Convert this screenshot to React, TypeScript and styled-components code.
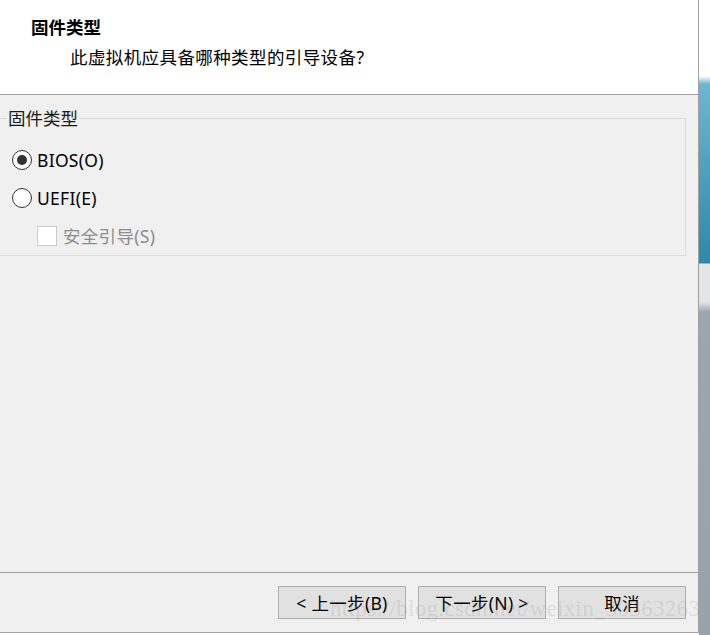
import React from "react";
import styled, { createGlobalStyle } from "styled-components";

const Global = createGlobalStyle`
  html, body {
    margin: 0;
    padding: 0;
    background: #ffffff;
  }
  body {
    font-family: "Noto Sans", "Noto Sans CJK SC", sans-serif;
    font-size: 17.5px;
    color: #000;
  }
`;

const Screen = styled.div`
  position: relative;
  display: flex;
  width: 710px;
  height: 635px;
  overflow: hidden;
  background: #ffffff;
`;

const Dialog = styled.div`
  display: flex;
  flex-direction: column;
  width: 699px;
  height: 633px;
  border-right: 1px solid #a0a0a0;
  border-bottom: 1px solid #a0a0a0;
  box-sizing: border-box;
  background: #f0f0f0;
  flex-shrink: 0;
`;

const Header = styled.div`
  height: 95px;
  box-sizing: border-box;
  background: #ffffff;
  border-bottom: 1px solid #a0a0a0;
  padding: 15px 0 0 31px;
  display: flex;
  flex-direction: column;
`;

const Title = styled.div`
  font-weight: bold;
  line-height: 24px;
  color: #000;
`;

const Subtitle = styled.div`
  margin: 6px 0 0 39px;
  line-height: 24px;
  letter-spacing: 0.4px;
  color: #000;
`;

const Body = styled.div`
  flex: 1;
  padding-top: 11px;
  box-sizing: border-box;
`;

const Group = styled.fieldset`
  margin: 0 12px 0 -4px;
  padding: 11px 0 0 15px;
  border: 1px solid #dcdcdc;
  min-width: 0;
`;

const Legend = styled.legend`
  margin-left: -5px;
  padding: 0 2px 0 1px;
  line-height: 24px;
  color: #1a1a1a;
`;

const Row = styled.label<{ $indent?: number }>`
  display: flex;
  align-items: center;
  height: 38px;
  padding-left: ${(p) => p.$indent ?? 0}px;
  gap: 5px;
`;

const RadioCircle = styled.span<{ $checked?: boolean }>`
  width: 20px;
  height: 20px;
  box-sizing: border-box;
  border-radius: 50%;
  border: 1px solid #333;
  background: #fff;
  display: flex;
  align-items: center;
  justify-content: center;
  &::after {
    content: "";
    width: 10px;
    height: 10px;
    border-radius: 50%;
    background: ${(p) => (p.$checked ? "#333" : "transparent")};
  }
`;

const CheckBox = styled.span`
  width: 20px;
  height: 20px;
  box-sizing: border-box;
  border: 1px solid #cccccc;
  background: #fff;
  margin-right: 1px;
`;

const OptionText = styled.span<{ $disabled?: boolean }>`
  color: ${(p) => (p.$disabled ? "#8d8d8d" : "#000")};
  line-height: 24px;
  letter-spacing: 0.3px;
`;

const Footer = styled.div`
  height: 60px;
  box-sizing: border-box;
  border-top: 1px solid #a0a0a0;
  display: flex;
  justify-content: flex-end;
  align-items: flex-start;
  gap: 12px;
  padding: 13px 12px 0 0;
`;

const Button = styled.button`
  width: 128px;
  height: 33px;
  box-sizing: border-box;
  background: #e1e1e1;
  border: 1px solid #adadad;
  font-family: "Noto Sans", "Noto Sans CJK SC", sans-serif;
  font-size: 17.5px;
  letter-spacing: 0.3px;
  color: #000;
  padding: 0;
  line-height: 24px;
`;

const Desktop = styled.div`
  flex: 1;
  height: 635px;
  background: linear-gradient(
    to bottom,
    #ffffff 0px,
    #ffffff 76px,
    #6db7d0 84px,
    #2f88aa 263px,
    #e3e5e7 264px,
    #e3e5e7 302px,
    #9ba6ae 312px,
    #97a2aa 635px
  );
`;

const Watermark = styled.div`
  position: absolute;
  left: 330px;
  top: 596px;
  font-family: "Liberation Serif", serif;
  font-size: 23px;
  letter-spacing: 0.3px;
  color: rgba(150, 150, 150, 0.22);
  pointer-events: none;
  white-space: nowrap;
`;

export default function App() {
  return (
    <>
      <Global />
      <Screen>
        <Dialog>
          <Header>
            <Title>固件类型</Title>
            <Subtitle>此虚拟机应具备哪种类型的引导设备?</Subtitle>
          </Header>
          <Body>
            <Group>
              <Legend>固件类型</Legend>
              <Row>
                <RadioCircle $checked />
                <OptionText>BIOS(O)</OptionText>
              </Row>
              <Row>
                <RadioCircle />
                <OptionText>UEFI(E)</OptionText>
              </Row>
              <Row $indent={25}>
                <CheckBox />
                <OptionText $disabled>安全引导(S)</OptionText>
              </Row>
            </Group>
          </Body>
          <Footer>
            <Button>&lt; 上一步(B)</Button>
            <Button>下一步(N) &gt;</Button>
            <Button>取消</Button>
          </Footer>
        </Dialog>
        <Desktop />
        <Watermark>https://blog.csdn.net/weixin_30363263</Watermark>
      </Screen>
    </>
  );
}
